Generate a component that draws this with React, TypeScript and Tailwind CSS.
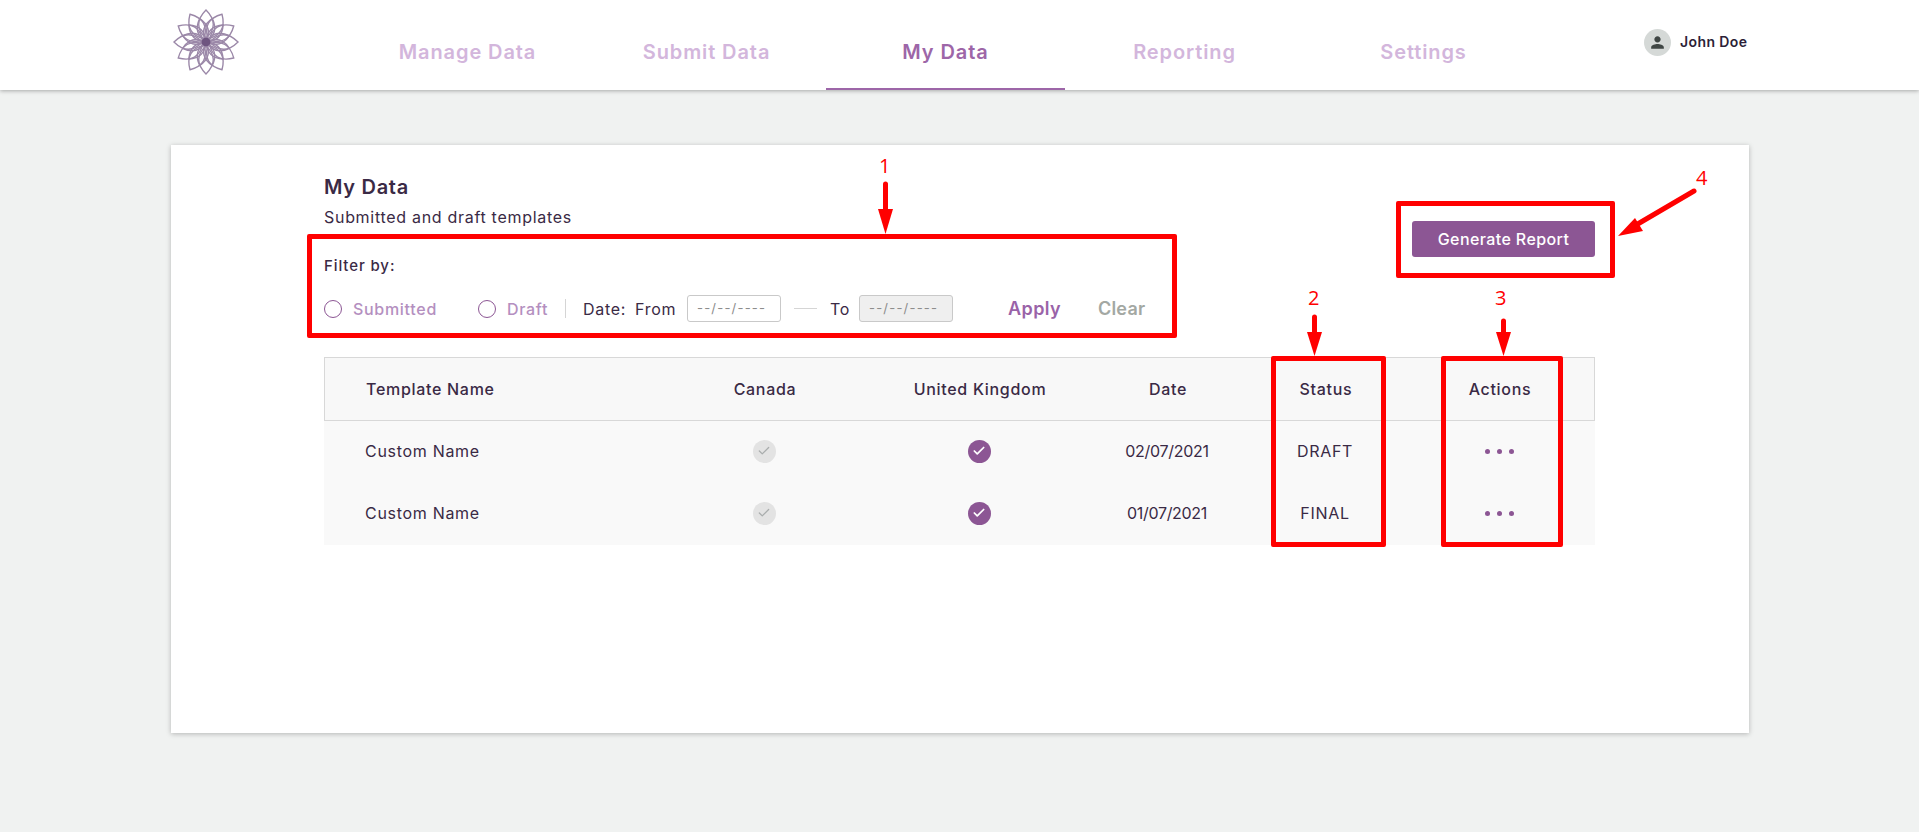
import { Check } from "lucide-react";

const TABS = ["Manage Data", "Submit Data", "My Data", "Reporting", "Settings"];

const ROWS = [
  { name: "Custom Name", date: "02/07/2021", status: "DRAFT" },
  { name: "Custom Name", date: "01/07/2021", status: "FINAL" },
];

const COLS = "grid grid-cols-[340px_200px_230px_146px_170px_178px] items-center";

function Logo() {
  const angles = Array.from({ length: 12 }, (_, i) => i * 30);
  return (
    <svg className="blur-[0.4px]" width="66" height="66" viewBox="-34 -34 68 68" fill="none" stroke="#9b88a8" strokeWidth="1.4">
      {angles.map((a) => (
        <g key={a} transform={`rotate(${a})`}>
          <path d="M0 -4 C10 -13 10 -23 0 -33 C-10 -23 -10 -13 0 -4Z" />
          <path d="M0 0 C7 -8 7 -17 0 -25 C-7 -17 -7 -8 0 0Z" transform="rotate(15)" />
        </g>
      ))}
      <circle r="4.5" fill="#6e5580" stroke="none" />
    </svg>
  );
}

function PersonIcon() {
  return (
    <svg width="19" height="19" viewBox="0 0 24 24" fill="currentColor">
      <path d="M12 12c2.21 0 4-1.79 4-4s-1.79-4-4-4-4 1.79-4 4 1.79 4 4 4zm0 2c-2.67 0-8 1.34-8 4v2h16v-2c0-2.66-5.33-4-8-4z" />
    </svg>
  );
}

function Tick({ on }: { on: boolean }) {
  return (
    <span
      className={`flex h-[23px] w-[23px] items-center justify-center rounded-full ${
        on ? "bg-[#8c5694] text-white" : "bg-[#e3e3e3] text-[#a9adad]"
      }`}
    >
      <Check size={14} strokeWidth={on ? 3 : 2.2} />
    </span>
  );
}

function Radio({ label, className }: { label: string; className: string }) {
  return (
    <label className={`flex items-center gap-[11px] ${className}`}>
      <span className="h-[18px] w-[18px] rounded-full border border-[#8c5694] bg-white" />
      <span className="font-medium text-[#b48fc0]">{label}</span>
    </label>
  );
}

function DateBox({ disabled }: { disabled?: boolean }) {
  return (
    <div
      className={`flex h-[27px] w-[94px] items-center rounded-[3px] border border-[#c9c9c9] pl-[9px] text-[13px] tracking-[1.2px] text-[#8d8d8d] ${
        disabled ? "bg-[#efefef]" : "bg-white"
      }`}
    >
      --/--/----
    </div>
  );
}

function Annotations() {
  return (
    <div className="pointer-events-none absolute inset-0 font-['Open_Sans',sans-serif] text-[20px] leading-none tracking-normal text-[#ff0000]">
      <div className="absolute left-[307px] top-[234px] h-[104px] w-[870px] rounded-[2px] border-[5px] border-[#ff0000]" />
      <div className="absolute left-[1271px] top-[356px] h-[191px] w-[115px] rounded-[2px] border-[5px] border-[#ff0000]" />
      <div className="absolute left-[1441px] top-[356px] h-[191px] w-[122px] rounded-[2px] border-[5px] border-[#ff0000]" />
      <div className="absolute left-[1396px] top-[201px] h-[77px] w-[219px] rounded-[2px] border-[5px] border-[#ff0000]" />
      <span className="absolute left-[879px] top-[156px]">1</span>
      <span className="absolute left-[1308px] top-[288px]">2</span>
      <span className="absolute left-[1495px] top-[288px]">3</span>
      <span className="absolute left-[1696px] top-[168px]">4</span>
      <svg className="absolute inset-0" width="1919" height="832" fill="#ff0000">
        <path d="M885.5 184V214" stroke="#ff0000" strokeWidth="5" strokeLinecap="round" />
        <path d="M878 209H893L885.5 234Z" />
        <path d="M1314.5 317V338" stroke="#ff0000" strokeWidth="5" strokeLinecap="round" />
        <path d="M1307 332H1322L1314.5 356Z" />
        <path d="M1503.5 321V338" stroke="#ff0000" strokeWidth="5" strokeLinecap="round" />
        <path d="M1496 332H1511L1503.5 356Z" />
        <path d="M1694 191L1636 225" stroke="#ff0000" strokeWidth="5" strokeLinecap="round" />
        <path d="M1618 236L1635 218L1643 231Z" />
      </svg>
    </div>
  );
}

export default function App() {
  return (
    <div className="relative flex h-[832px] flex-col overflow-hidden bg-[#f0f2f1] font-['Inter',sans-serif] tracking-[0.7px] text-[#3a2a45]">
      <header className="z-10 flex h-[90px] shrink-0 bg-white pl-[173px] shadow-[0_1px_4px_rgba(0,0,0,0.3)]">
        <div className="w-[175px] pt-[9px]">
          <Logo />
        </div>
        <nav className="flex">
          {TABS.map((tab) => (
            <a
              key={tab}
              className={`flex w-[239px] items-center justify-center border-b-2 pt-[16px] text-[20px] font-semibold tracking-[0.9px] ${
                tab === "My Data" ? "border-[#9d66a8] text-[#9d66a8]" : "border-transparent text-[#d3b6dc]"
              }`}
            >
              {tab}
            </a>
          ))}
        </nav>
        <div className="ml-[101px] flex items-start gap-[9px] pt-[29px]">
          <span className="flex h-[27px] w-[27px] items-center justify-center rounded-full bg-[#d5d9d7] text-[#3f4644]">
            <PersonIcon />
          </span>
          <span className="pt-[2px] text-[14px] font-semibold tracking-[0.4px] text-[#2d1f38]">John Doe</span>
        </div>
      </header>

      <main className="ml-[171px] mt-[55px] h-[588px] w-[1578px] bg-white pl-[153px] pt-[30px] shadow-[0_1px_5px_rgba(0,0,0,0.25)]">
        <div className="flex w-[1271px] items-start justify-between">
          <div>
            <h1 className="text-[20px] font-semibold leading-[24px]">My Data</h1>
            <p className="mt-[8px] text-[16px] leading-[20px]">Submitted and draft templates</p>
            <p className="mt-[29px] text-[15px] font-medium leading-[20px] tracking-[0.9px]">Filter by:</p>
            <div className="mt-[19px] flex h-[27px] items-center text-[16px]">
              <Radio label="Submitted" className="w-[154px]" />
              <Radio label="Draft" className="w-[87px]" />
              <span className="h-[19px] w-px bg-[#d5d5d5]" />
              <span className="ml-[17px] w-[52px]">Date:</span>
              <span className="w-[52px]">From</span>
              <DateBox />
              <span className="ml-[13px] h-px w-[23px] bg-[#d5d5d5]" />
              <span className="ml-[13px] w-[29px]">To</span>
              <DateBox disabled />
              <button className="ml-[55px] w-[90px] text-left text-[18px] font-semibold tracking-[0.4px] text-[#9a63a8]">Apply</button>
              <button className="text-[18px] font-semibold tracking-[0.2px] text-[#a3a8a3]">Clear</button>
            </div>
          </div>
          <button className="mt-[46px] h-[36px] w-[183px] rounded-[3px] bg-[#8c5694] pb-px text-[16px] font-medium tracking-[0.4px] text-white">
            Generate Report
          </button>
        </div>

        <div className="mt-[35px] w-[1271px] bg-[#f9f9f9] text-[16px]">
          <div className={`${COLS} h-[64px] border border-[#d8d8d8] bg-[#f8f8f8] text-center font-medium`}>
            <span className="pl-[41px] text-left">Template Name</span>
            <span>Canada</span>
            <span>United Kingdom</span>
            <span>Date</span>
            <span>Status</span>
            <span>Actions</span>
          </div>
          {ROWS.map((row) => (
            <div key={row.date} className={`${COLS} h-[62px] pb-[2px] text-center`}>
              <span className="pl-[41px] text-left">{row.name}</span>
              <span className="flex justify-center">
                <Tick on={false} />
              </span>
              <span className="flex justify-center">
                <Tick on />
              </span>
              <span className="tracking-[-0.3px]">{row.date}</span>
              <span>{row.status}</span>
              <span className="flex justify-center gap-[7px]">
                <i className="h-[5px] w-[5px] rounded-full bg-[#8c5694]" />
                <i className="h-[5px] w-[5px] rounded-full bg-[#8c5694]" />
                <i className="h-[5px] w-[5px] rounded-full bg-[#8c5694]" />
              </span>
            </div>
          ))}
        </div>
      </main>

      <Annotations />
    </div>
  );
}
